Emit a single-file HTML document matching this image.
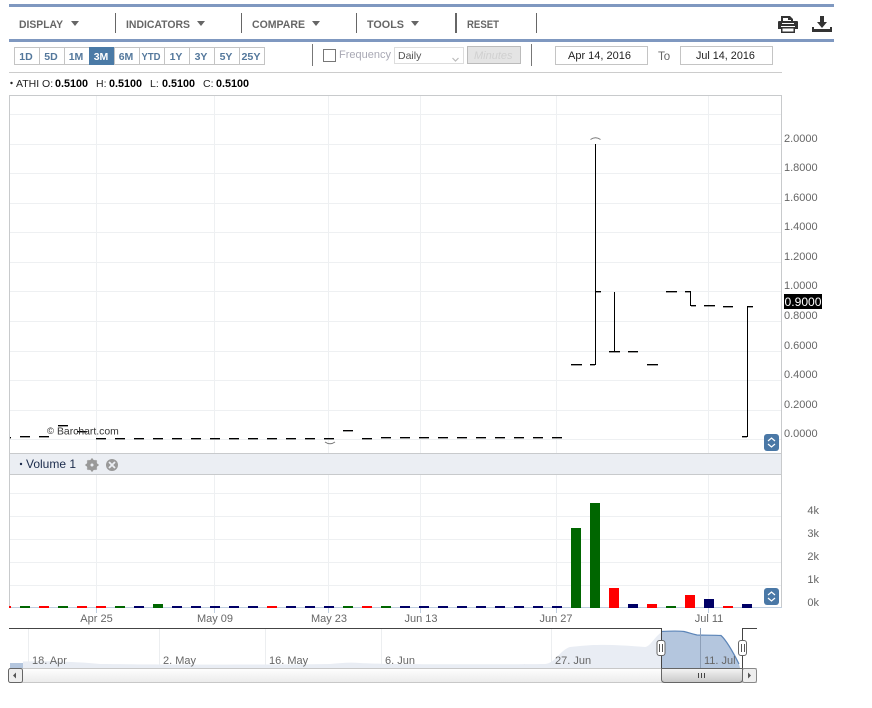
<!DOCTYPE html>
<html><head><meta charset="utf-8"><title>Chart</title>
<style>
html,body{margin:0;padding:0;background:#fff;width:872px;height:708px;overflow:hidden}
svg{display:block}
text{font-family:"Liberation Sans",Arial,sans-serif;font-size:11px;fill:#666}
.m{font-size:11px;font-weight:bold;fill:#666}
.r{font-size:10.5px;font-weight:bold;fill:#54789c;text-anchor:middle}
.l{fill:#222;font-size:10.5px}
.b{fill:#000;font-size:10.8px;font-weight:bold}
</style></head><body>
<svg width="872" height="708" viewBox="0 0 872 708" xmlns="http://www.w3.org/2000/svg">
<defs>
<linearGradient id="g1" x1="0" y1="0" x2="0" y2="1"><stop offset="0" stop-color="#fff"/><stop offset="1" stop-color="#ececec"/></linearGradient>
<linearGradient id="g2" x1="0" y1="0" x2="0" y2="1"><stop offset="0" stop-color="#f4f4f4"/><stop offset="1" stop-color="#c8c8c8"/></linearGradient>
</defs>
<!-- top bar -->
<rect x="9" y="4" width="825" height="3" fill="#7f98c0"/>
<rect x="9" y="39" width="825" height="3" fill="#7f98c0"/>
<g fill="#666">
<rect x="115" y="13" width="1" height="20"/><rect x="241" y="13" width="1" height="20"/><rect x="356" y="13" width="1" height="20"/><rect x="455" y="13" width="2" height="20"/><rect x="536" y="13" width="1" height="20"/>
<path d="M71 21h8l-4 5zM197 21h8l-4 5zM312 21h8l-4 5zM411 21h8l-4 5z"/>
</g>
<text class="m" x="19" y="28" textLength="44" lengthAdjust="spacingAndGlyphs">DISPLAY</text>
<text class="m" x="126" y="28" textLength="64" lengthAdjust="spacingAndGlyphs">INDICATORS</text>
<text class="m" x="252" y="28" textLength="53" lengthAdjust="spacingAndGlyphs">COMPARE</text>
<text class="m" x="367" y="28" textLength="37" lengthAdjust="spacingAndGlyphs">TOOLS</text>
<text class="m" x="467" y="28" textLength="32" lengthAdjust="spacingAndGlyphs">RESET</text>
<!-- printer -->
<g fill="#333">
<path d="M781 21v-5h9l3 3v2h-2v-1h-3v-2h-5v3z"/>
<path d="M779 21h18a1 1 0 0 1 1 1v7h-3v-3h-14v3h-3v-7a1 1 0 0 1 1-1z"/>
<path d="M781 27h14v6h-14zM782.500 28.500v3h11v-3z" fill-rule="evenodd"/>
<rect x="782" y="23" width="12" height="1" fill="#fff"/>
</g>
<!-- download -->
<g fill="#333">
<path d="M820 16h4v6h3l-5 6-5-6h3z"/>
<path d="M812 27h2v2h16v-2h2v5h-20z"/>
</g>
<!-- range buttons -->
<rect x="14.500" y="47.500" width="250" height="17" fill="#fff" stroke="#c4c4c4"/>
<rect x="89" y="47" width="25" height="18" fill="#4a7aa6"/>
<path d="M39.500 47v18M64.500 47v18M114.500 47v18M139.500 47v18M164.500 47v18M189.500 47v18M214.500 47v18M239.500 47v18" stroke="#c4c4c4" fill="none"/>
<text class="r" x="26" y="60">1D</text><text class="r" x="51" y="60">5D</text><text class="r" x="76" y="60">1M</text>
<text class="r" x="101" y="60" style="fill:#fff">3M</text>
<text class="r" x="126" y="60">6M</text><text class="r" x="151" y="60" textLength="19" lengthAdjust="spacingAndGlyphs">YTD</text><text class="r" x="176" y="60">1Y</text><text class="r" x="201" y="60">3Y</text><text class="r" x="226" y="60">5Y</text><text class="r" x="251" y="60" textLength="19" lengthAdjust="spacingAndGlyphs">25Y</text>
<rect x="312" y="44" width="1" height="22" fill="#777"/>
<rect x="323.500" y="49.500" width="12" height="12" fill="#fff" stroke="#777"/>
<text x="339" y="58" style="fill:#a8a8b4;font-size:11px">Frequency</text>
<rect x="394.500" y="47.500" width="69" height="16" fill="#fff" stroke="#ddd"/>
<text x="398" y="59" style="fill:#555;font-size:10.500px">Daily</text>
<path d="M452.500 58l3 3 3-3" fill="none" stroke="#bbb" stroke-width="1.200"/>
<rect x="467.500" y="46.500" width="53" height="17" fill="#e4e4e4" stroke="#bbb"/>
<text x="474" y="59" style="fill:#d0d0d0;font-size:11px;font-style:italic">Minutes</text>
<rect x="531" y="44" width="1" height="22" fill="#777"/>
<rect x="555.500" y="46.500" width="92" height="18" fill="#fff" stroke="#c4c4c4"/>
<text x="568" y="59" style="fill:#222;font-size:11px">Apr 14, 2016</text>
<text x="658" y="60" style="fill:#666;font-size:11.500px">To</text>
<rect x="680.500" y="46.500" width="92" height="18" fill="#fff" stroke="#c4c4c4"/>
<text x="696" y="59" style="fill:#222;font-size:10.800px">Jul 14, 2016</text>
<rect x="9" y="72" width="773" height="1" fill="#ccc"/>
<!-- legend -->
<circle cx="11.500" cy="83" r="1.200" fill="#222"/>
<text class="l" x="16" y="87">ATHI O:</text><text class="b" x="55" y="87">0.5100</text>
<text class="l" x="96" y="87">H:</text><text class="b" x="109" y="87">0.5100</text>
<text class="l" x="150" y="87">L:</text><text class="b" x="162" y="87">0.5100</text>
<text class="l" x="203" y="87">C:</text><text class="b" x="216" y="87">0.5100</text>
<!-- chart frame & grid -->
<g shape-rendering="crispEdges">
<path d="M10 114.500h771M10 144.500h771M10 173.500h771M10 203.500h771M10 232.500h771M10 262.500h771M10 291.500h771M10 321.500h771M10 351.500h771M10 380.500h771M10 410.500h771M10 439.500h771M96.500 96v357M214.500 96v357M328.500 96v357M420.500 96v357M556.500 96v357M708.500 96v357" stroke="#eef0f2" fill="none"/>
<path d="M10 493.500h771M10 516.500h771M10 539.500h771M10 562.500h771M10 585.500h771M96.500 475v132M214.500 475v132M328.500 475v132M420.500 475v132M556.500 475v132M708.500 475v132" stroke="#eef0f2" fill="none"/>
<rect x="10" y="454" width="771" height="20" fill="#ebeef3"/>
<path d="M9 95.500h773M9.500 95v513M781.500 95v513M10 453.500h771M10 474.500h771" stroke="#c8cacc" fill="none"/>
<path d="M9 607.500h773" stroke="#c0cfe0" fill="none"/>
<path d="M96.500 608v5M214.500 608v5M328.500 608v5M420.500 608v5M556.500 608v5M708.500 608v5" stroke="#c0cfe0" fill="none"/>
<!-- ohlc verticals -->
<path stroke="#000" fill="none" d="M595.500 144v221M614.500 292v60M690.500 291v15M747.500 306v131"/>
</g>
<!-- ohlc horizontals -->
<path stroke="#000" stroke-width="1.400" fill="none" transform="translate(0,.2)" d="M10 437.500h1M20 436.500h10M39 436.500h10M58 425.500h10M77 431.500h10M96 438.500h10M115 438.500h10M134 438.500h10M153 438.500h10M172 438.500h10M191 438.500h10M210 438.500h10M229 438.500h10M248 438.500h10M267 438.500h10M286 438.500h10M305 438.500h10M324 438.500h10M343 430.500h10M362 438.500h10M381 437.500h10M400 437.500h10M419 437.500h10M438 437.500h10M457 437.500h10M476 437.500h10M495 437.500h10M514 437.500h10M533 437.500h10M552 437.500h10M571 364.500h11M590 364.500h5M596 291.500h5M609 351.500h11M628 351.500h10M647 364.500h11M666 291.500h11M685 291.500h5M691 305.500h5M704 305.500h11M723 306.500h10M742 436.500h5M748 306.500h5"/>
<!-- volume bars -->
<g shape-rendering="crispEdges">
<g fill="#f00"><rect x="9" y="606" width="2" height="2"/><rect x="39" y="606" width="10" height="2"/><rect x="77" y="606" width="10" height="2"/><rect x="96" y="606" width="10" height="2"/><rect x="267" y="606" width="10" height="2"/><rect x="362" y="606" width="10" height="2"/><rect x="609" y="588" width="10" height="20"/><rect x="647" y="604" width="10" height="4"/><rect x="685" y="595" width="10" height="13"/><rect x="723" y="606" width="10" height="2"/></g>
<g fill="#060"><rect x="20" y="606" width="10" height="2"/><rect x="58" y="606" width="10" height="2"/><rect x="115" y="606" width="10" height="2"/><rect x="153" y="604" width="10" height="4"/><rect x="343" y="606" width="10" height="2"/><rect x="381" y="606" width="10" height="2"/><rect x="571" y="528" width="10" height="80"/><rect x="590" y="503" width="10" height="105"/><rect x="666" y="606" width="10" height="2"/></g>
<g fill="#006"><rect x="134" y="606" width="10" height="2"/><rect x="172" y="606" width="10" height="2"/><rect x="191" y="606" width="10" height="2"/><rect x="210" y="606" width="10" height="2"/><rect x="229" y="606" width="10" height="2"/><rect x="248" y="606" width="10" height="2"/><rect x="286" y="606" width="10" height="2"/><rect x="305" y="606" width="10" height="2"/><rect x="324" y="606" width="10" height="2"/><rect x="400" y="606" width="10" height="2"/><rect x="419" y="606" width="10" height="2"/><rect x="438" y="606" width="10" height="2"/><rect x="457" y="606" width="10" height="2"/><rect x="476" y="606" width="10" height="2"/><rect x="495" y="606" width="10" height="2"/><rect x="514" y="606" width="10" height="2"/><rect x="533" y="606" width="10" height="2"/><rect x="552" y="606" width="10" height="2"/><rect x="628" y="604" width="10" height="4"/><rect x="704" y="599" width="10" height="9"/><rect x="742" y="604" width="10" height="4"/></g>
</g>
<path d="M590.500 139.500q5-3.500 10 0M325 442q5 3.500 10 0" fill="none" stroke="#777"/>
<text x="47" y="434" style="fill:#333;font-size:9.500px">©</text>
<text x="57" y="434.500" style="fill:#333;font-size:10.400px">Barchart.com</text>
<!-- y labels -->
<g>
<text x="784" y="142">2.0000</text><text x="784" y="171">1.8000</text><text x="784" y="201">1.6000</text><text x="784" y="230">1.4000</text><text x="784" y="260">1.2000</text><text x="784" y="289">1.0000</text><text x="784" y="319">0.8000</text><text x="784" y="349">0.6000</text><text x="784" y="378">0.4000</text><text x="784" y="408">0.2000</text><text x="784" y="437">0.0000</text>
</g>
<rect x="784" y="294" width="38" height="15" fill="#000"/>
<text x="784.500" y="306" style="fill:#fff;font-size:12px" textLength="37" lengthAdjust="spacingAndGlyphs">0.9000</text>
<g>
<text x="819" y="514" text-anchor="end">4k</text><text x="819" y="537" text-anchor="end">3k</text><text x="819" y="560" text-anchor="end">2k</text><text x="819" y="583" text-anchor="end">1k</text><text x="819" y="606" text-anchor="end">0k</text>
</g>
<!-- scale buttons -->
<g>
<rect x="764" y="434" width="15" height="17" rx="3" fill="#4a78a6"/>
<path d="M768 441l3.500-3 3.500 3M768 444l3.500 3 3.500-3" fill="none" stroke="#fff" stroke-width="1.200"/>
<rect x="764" y="588" width="15" height="17" rx="3" fill="#4a78a6"/>
<path d="M768 595l3.500-3 3.500 3M768 598l3.500 3 3.500-3" fill="none" stroke="#fff" stroke-width="1.200"/>
</g>
<!-- volume header -->
<circle cx="21" cy="464" r="1.200" fill="#1c2c4c"/>
<text x="26" y="468" style="fill:#1c2c4c;font-size:12px">Volume 1</text>
<circle cx="92" cy="465" r="4" fill="none" stroke="#999" stroke-width="3"/>
<path d="M92 458.500v13M85.500 465h13M87.400 460.400l9.200 9.200M96.600 460.400l-9.200 9.200" stroke="#999" stroke-width="2"/>
<circle cx="92" cy="465" r="1.500" fill="#ebeef3"/>
<circle cx="112" cy="465" r="6" fill="#999"/>
<path d="M109 462l6 6M115 462l-6 6" stroke="#ebeef3" stroke-width="1.800"/>
<!-- x labels -->
<g text-anchor="middle">
<text x="96.500" y="622">Apr 25</text><text x="215" y="622">May 09</text><text x="329" y="622">May 23</text><text x="421" y="622">Jun 13</text><text x="556" y="622">Jun 27</text><text x="709" y="622">Jul 11</text>
</g>
<!-- navigator -->
<g shape-rendering="crispEdges"><path d="M28.500 629v39M159.500 629v39M265.500 629v39M381.500 629v39M551.500 629v39" stroke="#eceef0" fill="none"/></g>
<path d="M23 668V661.500C40 661 70 661 100 664C150 664.500 250 665 330 664C340 663 350 662 360 663C380 664.500 500 664.500 545 664C555 663.500 560 650 570 647C580 646 590 645 597 645C615 644.500 630 646 645 647C650 647 655 636 662 632V668Z" fill="#e9edf4"/>
<path d="M661 668V631.500C670 631 680 631 684 631.500C690 633 692 634 697 635C705 635.300 715 635 721 635.500C726 640 733 652 739 664L740 668Z" fill="#b4c6de"/>
<path d="M661.500 631.500C670 631 680 631 684 631.500C690 633 692 634 697 635C705 635.300 715 635 721 635.500C726 640 733 652 739 664" fill="none" stroke="#5c85b8" stroke-width="1.200"/>
<rect x="10" y="663" width="13" height="5" fill="#b4c6de"/>
<rect x="700" y="628" width="1" height="40" fill="#8d9fb8"/>
<text x="32" y="664">18. Apr</text><text x="163" y="664">2. May</text><text x="269" y="664">16. May</text><text x="385" y="664">6. Jun</text><text x="555" y="664">27. Jun</text><text x="704" y="664">11. Jul</text>
<g shape-rendering="crispEdges">
<path d="M9 628.500h653M661.500 628v40M742.500 628v40M742 628.500h15" stroke="#444" fill="none"/>
<rect x="9" y="668" width="748" height="14" fill="url(#g1)"/>
<path d="M9 668.500h748M9 682.500h748" stroke="#c8c8c8" fill="none"/>
</g>
<rect x="8.500" y="668.500" width="14" height="14" rx="2" fill="#eee" stroke="#666"/>
<path d="M13 675.500l3-3v6z" fill="#555"/>
<rect x="742.500" y="668.500" width="14" height="14" rx="2" fill="#eee" stroke="#888"/>
<path d="M751 675.500l-3-3v6z" fill="#555"/>
<path d="M661.500 668.500h81v11a3 3 0 0 1-3 3h-75a3 3 0 0 1-3-3z" fill="url(#g2)" stroke="#666"/>
<path d="M698.500 673v5M701.500 673v5M704.500 673v5" stroke="#444" shape-rendering="crispEdges"/>
<rect x="657" y="640.500" width="8" height="15" rx="2.500" fill="#fff" stroke="#666"/>
<path d="M659.500 644v8M662.500 644v8" stroke="#555" shape-rendering="crispEdges"/>
<rect x="738.500" y="640.500" width="8" height="15" rx="2.500" fill="#fff" stroke="#666"/>
<path d="M741.500 644v8M744.500 644v8" stroke="#555" shape-rendering="crispEdges"/>
</svg>
</body></html>
